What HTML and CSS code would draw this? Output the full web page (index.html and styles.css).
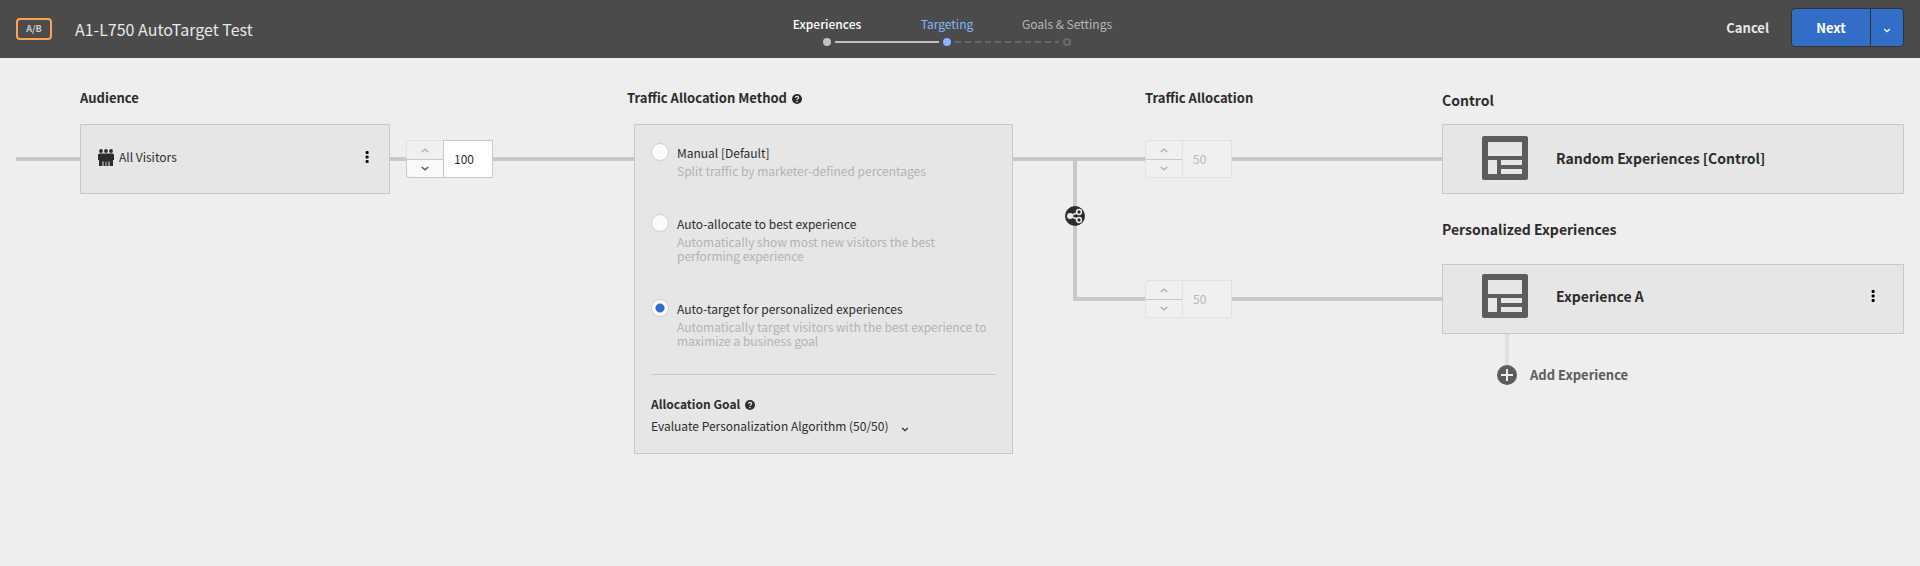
FILE: index.html
```html
<!DOCTYPE html>
<html lang="en">
<head>
<meta charset="utf-8">
<title>A1-L750 AutoTarget Test</title>
<link rel="stylesheet" href="styles.css">
</head>
<body>
<svg class="defs" aria-hidden="true">
  <symbol id="help" viewBox="0 0 10 10">
    <circle cx="5" cy="5" r="5" fill="#2c2c2c"/>
    <path d="M3.4 3.7C3.5 1.9 6.7 1.9 6.6 3.8C6.5 4.9 5 4.9 5 6.1" fill="none" stroke="#eee" stroke-width="1.2"/>
    <rect x="4.3" y="6.9" width="1.4" height="1.3" fill="#eee"/>
  </symbol>
  <symbol id="layout" viewBox="0 0 46 44">
    <path fill="#5c5c5c" fill-rule="evenodd" d="M2 0H44A2 2 0 0 1 46 2V42A2 2 0 0 1 44 44H2A2 2 0 0 1 0 42V2A2 2 0 0 1 2 0ZM6 6V20H40V6ZM6 24V38H15V24ZM19 24V29H40V24ZM19 33V38H40V33Z"/>
  </symbol>
  <symbol id="dots" viewBox="0 0 4 12">
    <rect x=".6" y="0" width="3" height="3" rx="1"/><rect x=".6" y="4.500" width="3" height="3" rx="1"/><rect x=".6" y="9" width="3" height="3" rx="1"/>
  </symbol>
  <symbol id="up" viewBox="0 0 8 5"><path d="M.7 4L4 1.2L7.3 4" fill="none" stroke="currentColor" stroke-width="1.5"/></symbol>
  <symbol id="down" viewBox="0 0 8 5"><path d="M.7 1L4 3.8L7.3 1" fill="none" stroke="currentColor" stroke-width="1.5"/></symbol>
  <symbol id="down-small" viewBox="0 0 8 5"><path d="M1.200 1L4 3.600L6.800 1" fill="none" stroke="currentColor" stroke-width="1.200"/></symbol>
</svg>

<header class="topbar">
  <div class="activity">
    <span class="badge">A/B</span>
    <h1 class="title">A1-L750 AutoTarget Test</h1>
  </div>
  <ol class="steps">
    <li class="step done">Experiences</li>
    <li class="step current" aria-current="step">Targeting</li>
    <li class="step">Goals &amp; Settings</li>
  </ol>
  <div class="actions">
    <button class="cancel" type="button">Cancel</button>
    <div class="split">
      <button class="next" type="button">Next</button>
      <button class="more" type="button" aria-label="More options"><svg width="8" height="5"><use href="#down-small"/></svg></button>
    </div>
  </div>
</header>

<main class="flow">
  <h2 class="heading at-audience">Audience</h2>
  <h2 class="heading at-method outdent">Traffic Allocation Method <svg width="10" height="10"><use href="#help"/></svg></h2>
  <h2 class="heading at-split">Traffic Allocation</h2>
  <h2 class="heading large at-cards">Control</h2>
  <h2 class="heading large at-cards second">Personalized Experiences</h2>

  <span class="line at-lead"></span>
  <section class="card audience">
    <svg class="people" width="16" height="17" viewBox="0 0 16 17" fill="#2c2c2c">
      <circle cx="3" cy="2" r="1.900"/><circle cx="8" cy="2" r="1.900"/><circle cx="13" cy="2" r="1.900"/>
      <path d="M1.500 4.500H14.500Q16 4.700 16 6.200V11H15V17H11.500V12.500H10.500V17H8.400V12.500H7.600V17H5.500V12.500H4.500V17H1V11H0V6.200Q0 4.700 1.500 4.500Z"/>
    </svg>
    <span class="name">All Visitors</span>
    <button class="menu" type="button" aria-label="Audience menu"><svg width="4" height="12"><use href="#dots"/></svg></button>
  </section>
  <span class="line at-gap"></span>
  <div class="stepper at-percent">
    <button class="up" type="button" aria-label="Increase" disabled><svg width="8" height="5"><use href="#up"/></svg></button>
    <button class="down" type="button" aria-label="Decrease"><svg width="8" height="5"><use href="#down"/></svg></button>
    <input type="text" value="100" aria-label="Audience percentage">
  </div>
  <span class="line at-in"></span>

  <section class="card method">
    <div class="options">
      <div class="option">
        <input type="radio" name="method" id="manual">
        <label for="manual">Manual [Default]</label>
        <p>Split traffic by marketer-defined percentages</p>
      </div>
      <div class="option">
        <input type="radio" name="method" id="allocate">
        <label for="allocate">Auto-allocate to best experience</label>
        <p>Automatically show most new visitors the best performing experience</p>
      </div>
      <div class="option">
        <input type="radio" name="method" id="target" checked>
        <label for="target">Auto-target for personalized experiences</label>
        <p>Automatically target visitors with the best experience to maximize a business goal</p>
      </div>
    </div>
    <div class="goal">
      <label class="goal-label" for="goal">Allocation Goal <svg width="10" height="10"><use href="#help"/></svg></label>
      <div class="goal-select">
        <select id="goal"><option>Evaluate Personalization Algorithm (50/50)</option></select>
        <svg width="8" height="5"><use href="#down-small"/></svg>
      </div>
    </div>
  </section>

  <span class="line at-out"></span>
  <div class="branch">
    <svg width="20" height="20" viewBox="0 0 20 20">
      <circle cx="10" cy="10" r="10" fill="#2c2c2c"/>
      <path d="M5 10L14 6M5 10L14 14" stroke="#eee" stroke-width="1.4"/>
      <circle cx="5" cy="10" r="3" fill="#eee"/>
      <circle cx="14" cy="6" r="2.400" fill="#2c2c2c" stroke="#eee" stroke-width="1.500"/>
      <circle cx="14" cy="14" r="2.400" fill="#2c2c2c" stroke="#eee" stroke-width="1.500"/>
    </svg>
  </div>
  <div class="stepper off at-split row-a">
    <button class="up" type="button" aria-label="Increase" disabled><svg width="8" height="5"><use href="#up"/></svg></button>
    <button class="down" type="button" aria-label="Decrease" disabled><svg width="8" height="5"><use href="#down"/></svg></button>
    <input type="text" value="50" aria-label="Control percentage" disabled>
  </div>
  <div class="stepper off at-split row-b">
    <button class="up" type="button" aria-label="Increase" disabled><svg width="8" height="5"><use href="#up"/></svg></button>
    <button class="down" type="button" aria-label="Decrease" disabled><svg width="8" height="5"><use href="#down"/></svg></button>
    <input type="text" value="50" aria-label="Personalized percentage" disabled>
  </div>
  <span class="line at-reach row-a"></span>
  <span class="line at-reach row-b"></span>

  <section class="card experience at-cards row-a">
    <svg width="46" height="44"><use href="#layout"/></svg>
    <span class="name">Random Experiences [Control]</span>
  </section>
  <section class="card experience raised at-cards row-b">
    <svg width="46" height="44"><use href="#layout"/></svg>
    <span class="name">Experience A</span>
    <button class="menu" type="button" aria-label="Experience menu"><svg width="4" height="12"><use href="#dots"/></svg></button>
  </section>
  <button class="add" type="button">
    <svg width="20" height="20" viewBox="0 0 20 20"><circle cx="10" cy="10" r="10" fill="#5c5c5c"/><path d="M10 4V16M4 10H16" stroke="#eee" stroke-width="2"/></svg>
    Add Experience
  </button>
</main>
</body>
</html>
```
FILE: styles.css
```css
*, *::before, *::after { box-sizing: border-box; }

body {
  margin: 0;
  background: #eee;
  color: #2c2c2c;
  font: 12px/14px "Noto Sans CJK SC", "Noto Sans", sans-serif;
}

button, input, select { font: inherit; color: inherit; }
button { padding: 0; border: 0; background: none; cursor: pointer; }
svg { flex: none; }
h1, h2, p, ol { margin: 0; padding: 0; }
.defs { position: absolute; width: 0; height: 0; }

/* Top bar */
.topbar {
  display: grid;
  grid-template-columns: 1fr 360px 1fr;
  height: 58px;
  padding: 0 16px;
  background: #4b4b4b;
  color: #e8e8e8;
}
.activity { display: flex; align-items: center; gap: 23px; }
.badge {
  width: 36px;
  border: 2px solid #ffa14f;
  border-radius: 4px;
  font-size: 9px;
  font-weight: 700;
  line-height: 18px;
  text-align: center;
  color: #d0d0d0;
}
.title { font-size: 16px; font-weight: 400; line-height: 24px; }

.steps {
  display: flex;
  align-items: flex-start;
  margin: 0 13px 0 -13px;
  padding-top: 15px;
  list-style: none;
}
.step {
  position: relative;
  flex: 1;
  text-align: center;
  line-height: 18px;
  color: #b8b8b8;
}
.step::after {
  content: "";
  display: block;
  width: 8px;
  height: 8px;
  margin: 5px auto 0;
  border: 2px solid #6a6a6a;
  border-radius: 50%;
}
.step::before {
  content: "";
  position: absolute;
  top: 26px;
  left: calc(50% + 8px);
  right: calc(8px - 50%);
  height: 2px;
  background: repeating-linear-gradient(90deg, #666 0 6px, transparent 6px 10px);
}
.step:last-child::before { display: none; }
.step.done { color: #fff; font-weight: 500; }
.step.done::after { background: #c1c1c1; border-color: #c1c1c1; }
.step.done::before { background: #c1c1c1; }
.step.current { color: #85b7ff; }
.step.current::after { background: #85b7ff; border-color: #85b7ff; }

.actions {
  display: flex;
  align-items: center;
  justify-content: flex-end;
  gap: 22px;
  padding-bottom: 3px;
  font-size: 13px;
  font-weight: 700;
}
.split { display: flex; border: 1px solid #323232; border-radius: 4px; overflow: hidden; background: #326ec8; color: #fff; }
.next { width: 78px; height: 37px; }
.more { width: 33px; border-left: 1px solid #323232; }

/* Allocation flow */
.flow {
  display: grid;
  grid-template-columns: 64px minmax(160px, 310fr) 16px 87px minmax(16px, 141fr) 379px 132px 87px minmax(16px, 210fr) minmax(300px, 462fr);
  grid-template-rows: 66px 70px 70px 70px auto;
  padding: 0 16px;
}
.heading { grid-row: 1; padding-top: 31px; font-size: 13px; font-weight: 700; line-height: 18px; white-space: nowrap; }
.heading.large { padding-top: 33px; font-size: 14px; }
.heading.second { grid-row: 3; padding-top: 26px; }
.heading svg, .goal-label svg { margin-left: 2px; vertical-align: -1px; }
.outdent { margin-left: -7px; }
.at-audience { grid-column: 2; }
.at-method { grid-column: 6; }
.at-split { grid-column: 8; }
.at-cards { grid-column: 10; }
.row-a { grid-row: 2; }
.row-b { grid-row: 4; }

.line { grid-row: 2; align-self: center; height: 4px; background: #c8c8c8; }
.at-lead { grid-column: 1; }
.at-gap { grid-column: 3; }
.at-in { grid-column: 5; }
.at-out { grid-column: 7; }
.at-reach { grid-column: 9; }
.line.row-b { grid-row: 4; }

.branch {
  grid-column: 7;
  grid-row: 2 / 5;
  margin: 37px 0 33px 60px;
  border: solid #c8c8c8;
  border-width: 0 0 4px 4px;
  padding-top: 45px;
}
.branch svg { display: block; margin-left: -12px; }

.card { border: 1px solid #c8c8c8; background: #e6e6e6; }
.menu { display: flex; justify-content: center; width: 16px; margin-left: auto; }

.audience { grid-column: 2; grid-row: 2; display: flex; align-items: center; gap: 5px; padding: 0 14px 4px 17px; }

.stepper {
  display: grid;
  grid-template-columns: 37px 50px;
  grid-template-rows: 19px 19px;
  align-self: center;
}
.at-percent { grid-column: 4; grid-row: 2; }
.stepper input {
  grid-column: 2;
  grid-row: 1 / 3;
  min-width: 0;
  padding: 0 10px;
  border: 1px solid #c8c8c8;
  border-radius: 0;
  background: #fff;
}
.stepper button { grid-column: 1; display: grid; place-items: center; border: 1px solid #c8c8c8; border-right: 0; background: #fafafa; }
.stepper .up { border-bottom: 0; border-radius: 4px 0 0 0; }
.stepper .down { border-radius: 0 0 0 4px; color: #5c5c5c; }
.stepper button:disabled { border-color: #e2e2e2; background: #f0f0f0; color: #b3b3b3; }
.stepper.off .down { border-top-color: #c8c8c8; }
.stepper.off input { border-color: #e2e2e2; background: #f0f0f0; color: #b8b8b8; }

.method { grid-column: 6; grid-row: 2 / 6; padding: 18px 16px 15px; }
.options { display: grid; gap: 36px; padding-bottom: 26px; border-bottom: 1px solid #c8c8c8; }
.option { display: grid; grid-template-columns: 18px 1fr; column-gap: 8px; row-gap: 1px; align-content: start; }
.option input {
  appearance: none;
  width: 18px;
  height: 18px;
  margin: 0;
  border: 1px solid #d0d0d0;
  border-radius: 50%;
  background: #fafafa;
}
.option input:checked { background: radial-gradient(circle, #326ec8 4px, #fafafa 5px); }
.option label { line-height: 20px; }
.option p { grid-column: 2; color: #b3b3b3; }
.goal { padding-top: 19px; }
.goal-label { display: block; font-weight: 700; line-height: 20px; }
.goal-select { display: flex; align-items: center; gap: 12px; }
.goal-select select { appearance: none; padding: 0; border: 0; background: none; line-height: 24px; }
.goal-select svg { margin-top: 6px; }

.experience { display: flex; align-items: center; gap: 28px; padding: 0 22px 3px 39px; font-size: 14px; font-weight: 700; }
.experience.raised { padding-bottom: 7px; }

.add {
  grid-column: 10;
  grid-row: 5;
  display: flex;
  align-items: center;
  align-self: start;
  justify-self: start;
  gap: 13px;
  margin-left: 55px;
  padding-top: 31px;
  background: linear-gradient(#e0e0e0, #e0e0e0) 8px 0 / 4px 32px no-repeat;
  color: #5c5c5c;
  font-size: 13px;
  font-weight: 700;
}
```
